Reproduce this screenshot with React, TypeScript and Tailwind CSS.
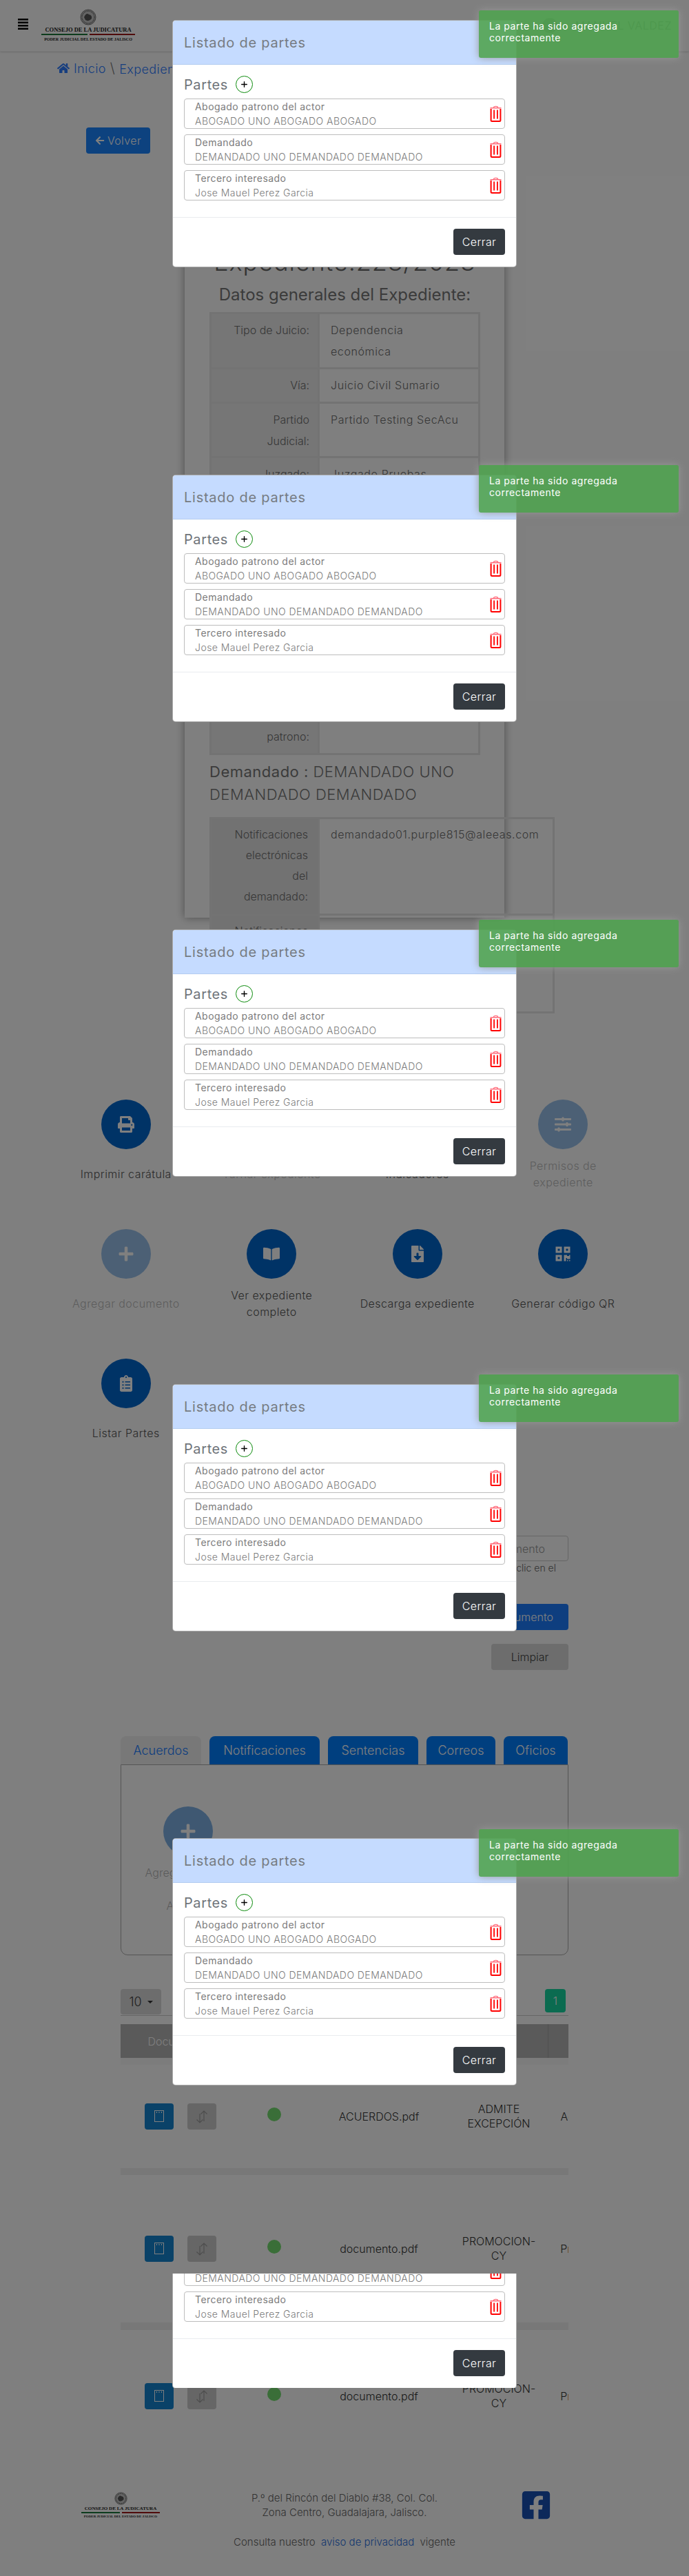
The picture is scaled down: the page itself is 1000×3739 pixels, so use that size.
import React from 'react';
import { Plus } from 'lucide-react';
import {
  FaArrowLeft,
  FaBookOpen,
  FaClipboardList,
  FaFacebookSquare,
  FaFileDownload,
  FaHome,
  FaPlus,
  FaPrint,
  FaQrcode,
  FaSlidersH,
} from 'react-icons/fa';

const parts = [
  { role: 'Abogado patrono del actor', name: 'ABOGADO UNO ABOGADO ABOGADO' },
  { role: 'Demandado', name: 'DEMANDADO UNO DEMANDADO DEMANDADO' },
  { role: 'Tercero interesado', name: 'Jose Mauel Perez Garcia' },
];

const generalRows = [
  { label: ['Tipo de Juicio:'], value: ['Dependencia', 'económica'], h: 'h-[80px]' },
  { label: ['Vía:'], value: ['Juicio Civil Sumario'], h: 'h-[50px]' },
  { label: ['Partido', 'Judicial:'], value: ['Partido Testing SecAcu'], h: 'h-[79px]' },
  { label: ['Juzgado:'], value: ['Juzgado Pruebas', 'SecAcu'], h: 'h-[79px]' },
  { label: ['Fecha de', 'registro:'], value: ['12/05/2023'], h: 'h-[80px]' },
  { label: ['Actor:'], value: ['ACTOR UNO ACTOR ACTOR'], h: 'h-[80px]' },
  { label: ['Correo del', 'actor:'], value: ['actor01@aleeas.com'], h: 'h-[80px]' },
  { label: ['Notificaciones', 'del abogado', 'patrono:'], value: [''], h: 'h-[112px]' },
];

const actions = [
  { label: ['Imprimir carátula'], icon: <FaPrint />, off: false },
  { label: ['Turnar expediente'], icon: <FaPlus />, off: true },
  { label: ['Indicadores'], icon: <FaSlidersH />, off: false },
  { label: ['Permisos de', 'expediente'], icon: <FaSlidersH />, off: true },
  { label: ['Agregar documento'], icon: <FaPlus />, off: true },
  { label: ['Ver expediente', 'completo'], icon: <FaBookOpen />, off: false },
  { label: ['Descarga expediente'], icon: <FaFileDownload />, off: false },
  { label: ['Generar código QR'], icon: <FaQrcode />, off: false },
  { label: ['Listar Partes'], icon: <FaClipboardList />, off: false },
];

const tabs = [
  { name: 'Notificaciones', w: 'w-[160px]' },
  { name: 'Sentencias', w: 'w-[131px]' },
  { name: 'Correos', w: 'w-[100px]' },
  { name: 'Oficios', w: 'w-[93px]' },
];

const MenuBars = () => (
  <svg width="15" height="16" viewBox="0 0 15 16" fill="#000000" className="shrink-0">
    <rect y="0" width="15" height="2.5" />
    <rect y="4.5" width="15" height="2.5" />
    <rect y="9" width="15" height="2.5" />
    <rect y="13.5" width="15" height="2.5" />
  </svg>
);

const TrashIcon = () => (
  <svg width="17" height="24" viewBox="0 0 17 24" fill="none" className="shrink-0">
    <path d="M5.5 3 C5.5 .8 11.5 .8 11.5 3" stroke="#ff6b7a" strokeWidth="1.4" />
    <path d="M.5 3.7 H16.5" stroke="#ff6b7a" strokeWidth="1.6" />
    <path d="M1.6 5 V21.5 Q1.6 23 3.1 23 H13.9 Q15.4 23 15.4 21.5 V5" stroke="#ff0000" strokeWidth="2" />
    <path d="M6.1 6.5 V19.5 M10.9 6.5 V19.5" stroke="#ff0000" strokeWidth="1.8" />
  </svg>
);

const PartsModal = () => (
  <div className="w-[500px] h-[359px] bg-white border border-[#00000055] rounded-[5px] overflow-hidden flex flex-col">
    <div className="h-[64px] bg-[#c5dbff] border-b border-[#b4cdf0] pl-4 flex items-center text-[20px] tracking-[0.75px] text-[#767b82]">
      Listado de partes
    </div>
    <div className="px-4 h-[222px] pt-[16px] border-b border-[#e9ecef]">
      <div className="flex items-center gap-[11px] h-[25px] text-[20px] tracking-[0.6px] text-[#6f747a]">
        Partes
        <span className="w-[25px] h-[25px] rounded-full border border-[#0a8a0a] flex items-center justify-center text-black">
          <Plus size={13} strokeWidth={2.5} />
        </span>
      </div>
      <ul className="mt-[8px] flex flex-col gap-[8px]">
        {parts.map((p) => (
          <li
            key={p.role}
            className="h-[44px] border border-[#bdbdbd] rounded-[4px] pl-[15px] pr-[4px] flex items-center justify-between text-[14px] leading-[21px] tracking-[0.45px] text-[#7b7b7b]"
          >
            <div className="whitespace-nowrap">
              <p>{p.role}</p>
              <p className="font-light">{p.name}</p>
            </div>
            <TrashIcon />
          </li>
        ))}
      </ul>
    </div>
    <div className="flex-1 flex justify-end pt-[16px] pr-4">
      <button className="w-[75px] h-[38px] rounded-[4px] bg-[#343a40] text-white text-[16px] tracking-[0.4px] font-light">
        Cerrar
      </button>
    </div>
  </div>
);

const Toast = () => (
  <div className="w-[290px] h-[69px] rounded-[3px] bg-[#51a351]/90 shadow-[0_0_12px_#999] pt-[14px] pl-[15px] text-[14px] leading-[17px] tracking-[0.55px] text-white">
    La parte ha sido agregada
    <br />
    correctamente
  </div>
);

const Seal = ({ className }: { className: string }) => (
  <svg viewBox="0 0 24 24" className={className}>
    <circle cx="12" cy="12" r="11" fill="#c8c8c8" stroke="#777" strokeWidth="1" />
    <circle cx="12" cy="12" r="9" fill="none" stroke="#555" strokeWidth="1.4" strokeDasharray="1 1" />
    <path d="M6 12 Q9 5 13 8 Q18 9 17 14 Q13 19 8 16 Z" fill="#555" />
  </svg>
);

const HeaderLogo = () => (
  <div className="w-[136px] shrink-0 flex flex-col items-center font-['Liberation_Serif',serif] font-bold text-[#222]">
    <Seal className="w-[24px] h-[24px]" />
    <p className="mt-[1px] whitespace-nowrap text-[8.5px] leading-[11px]">CONSEJO DE LA JUDICATURA</p>
    <div className="w-full flex gap-[3px] h-[2px]">
      <span className="flex-1 bg-[#1d7a3c]" />
      <span className="flex-1 bg-[#a01818]" />
    </div>
    <p className="mt-[2px] whitespace-nowrap text-[6px] leading-[9px]">PODER JUDICIAL DEL ESTADO DE JALISCO</p>
  </div>
);

const FooterLogo = () => (
  <div className="w-[114px] shrink-0 flex flex-col items-center font-['Liberation_Serif',serif] font-bold text-[#222]">
    <Seal className="w-[19px] h-[19px]" />
    <p className="mt-[1px] whitespace-nowrap text-[7.1px] leading-[9px]">CONSEJO DE LA JUDICATURA</p>
    <div className="w-full flex gap-[3px] h-[2px]">
      <span className="flex-1 bg-[#1d7a3c]" />
      <span className="flex-1 bg-[#a01818]" />
    </div>
    <p className="mt-[1px] whitespace-nowrap text-[5px] leading-[8px]">PODER JUDICIAL DEL ESTADO DE JALISCO</p>
  </div>
);

const InfoCell = ({ lines, head = false }: { lines: string[]; head?: boolean }) => (
  <td className={`border-[3px] border-[#e6e6e6] align-top pt-[8px] pb-[6px] leading-[31px] font-light ${head ? 'bg-[#ececec] text-right pr-[12px] pl-[6px]' : 'pl-[16px] pr-[6px] tracking-[0.6px]'}`}>
    {lines.map((l) => (
      <div key={l} className="whitespace-nowrap">{l}</div>
    ))}
  </td>
);

const NotebookIcon = () => (
  <svg width="16" height="18" viewBox="0 0 16 18" fill="none" stroke="#ffffff" strokeWidth="1">
    <rect x="1.5" y=".5" width="13" height="16" />
    <path d="M4 3h1M7.5 3h1M11 3h1" strokeWidth="2" />
  </svg>
);

const SwapIcon = () => (
  <svg width="20" height="20" viewBox="0 0 20 20" fill="none" stroke="#9a9a9a" strokeWidth="1.2">
    <path d="M13 17V2M8.5 6.5 13 2l4.5 4.5" />
    <path d="M7 6v13M2.5 14.5 7 19l4.5-4.5" />
  </svg>
);

const DocRow = ({ file, kind, next, h }: { file: string; kind: string[]; next: string; h: string }) => (
  <div className={`flex items-center whitespace-nowrap font-light text-[16px] leading-[21px] text-[#333] ${h}`}>
    <div className="w-[165px] shrink-0 pl-[35px] flex gap-[20px]">
      <button className="w-[42px] h-[38px] rounded-[4px] bg-[#1484d0] flex items-center justify-center">
        <NotebookIcon />
      </button>
      <button className="w-[42px] h-[38px] rounded-[4px] bg-[#cccccc] flex items-center justify-center">
        <SwapIcon />
      </button>
    </div>
    <div className="w-[116px] shrink-0 flex justify-center">
      <span className="w-[20px] h-[20px] rounded-full bg-[#75dd70] mb-[6px]" />
    </div>
    <div className="w-[188px] shrink-0 text-center">{file}</div>
    <div className="w-[160px] shrink-0 text-center">
      {kind.map((k) => (
        <div key={k}>{k}</div>
      ))}
    </div>
    <div className="w-[152px] shrink-0 text-center">{next}</div>
  </div>
);

const modalTops = ['top-[29px]', 'top-[689px]', 'top-[1349px]', 'top-[2009px]', 'top-[2668px]'];
const toastTops = ['top-[15px]', 'top-[675px]', 'top-[1335px]', 'top-[1995px]', 'top-[2655px]'];

export default function App() {
  return (
    <div className="relative w-[1000px] h-[3739px] overflow-hidden bg-white font-['Inter',sans-serif] text-[16px] text-[#6e6e6e]">
      {/* top bar */}
      <header className="h-[75px] flex items-center border-b border-[#eee] shadow-sm">
        <div className="ml-[26px] mb-[5px]">
          <MenuBars />
        </div>
        <div className="ml-[19px]">
          <HeaderLogo />
        </div>
        <div className="ml-auto pr-[25px] flex items-center gap-[26px] text-[16px] tracking-[0.5px]">
          <span className="w-[22px] h-[22px] rounded-full bg-[#999]" />
          MANUEL VALDEZ
        </div>
      </header>

      <div className="mt-[12px] h-[24px] pl-[83px] flex items-center gap-[6px] text-[#2f7dff] text-[18px] tracking-[0.4px] font-light whitespace-nowrap">
        <FaHome size={18} />
        <span>Inicio</span>
        <span className="text-[#777] text-[20px]">\</span>
        <span className="mt-[3px]">Expediente</span>
      </div>

      <button className="mt-[74px] ml-[125px] w-[93px] h-[38px] rounded-[4px] bg-[#1a84ff] text-white font-light text-[16px] tracking-[0.4px] flex items-center justify-center gap-[4px]">
        <FaArrowLeft size={14} /> Volver
      </button>

      {/* general data card */}
      <section className="mt-[107px] ml-[268px] w-[464px] h-[1002px] bg-white shadow-[0_0_12px_#00000066] pt-[30px] pl-[36px]">
        <h1 className="w-[393px] text-center text-[36px] leading-[40px] tracking-[0.9px] text-[#666] font-light whitespace-nowrap">
          Expediente:223/2023
        </h1>
        <h2 className="mt-[12px] w-[393px] text-center text-[24px] leading-[32px] text-[#777] whitespace-nowrap">
          Datos generales del Expediente:
        </h2>
        <table className="mt-[9px] w-[393px] table-fixed border-collapse">
          <colgroup>
            <col className="w-[157px]" />
            <col />
          </colgroup>
          <tbody>
            {generalRows.map((row) => (
              <tr key={row.label.join()} className={row.h}>
                <InfoCell lines={row.label} head />
                <InfoCell lines={row.value} />
              </tr>
            ))}
          </tbody>
        </table>
        <h3 className="mt-[8px] w-[393px] text-[22px] leading-[33px] tracking-[0.5px] text-[#777] font-light">
          <span className="font-normal">Demandado :</span> DEMANDADO UNO DEMANDADO DEMANDADO
        </h3>
        <table className="mt-[16px] w-[501px] table-fixed border-collapse">
          <colgroup>
            <col className="w-[157px]" />
            <col />
          </colgroup>
          <tbody>
            <tr className="h-[140px]">
              <td className="border-[3px] border-[#e6e6e6] bg-[#e4e4e4] text-right pr-[14px] pt-[7px] pb-[6px] align-top leading-[30px] font-light">
                Notificaciones
                <br />
                electrónicas
                <br />
                del
                <br />
                demandado:
              </td>
              <td className="border-[3px] border-[#e6e6e6] pl-[16px] pt-[7px] pb-[6px] align-top leading-[30px] font-light tracking-[0.6px] whitespace-nowrap">
                demandado01.purple815@aleeas.com
              </td>
            </tr>
            <tr className="h-[142px]">
              <td className="border-[3px] border-[#e6e6e6] bg-[#e4e4e4] text-right pr-[14px] pt-[7px] pb-[6px] align-top leading-[30px] font-light">
                Notificaciones
                <br />
                físicas
                <br />
                del
                <br />
                demandado:
              </td>
              <td className="border-[3px] border-[#e6e6e6]" />
            </tr>
          </tbody>
        </table>
      </section>

      {/* actions */}
      <section className="mt-[264px] mx-auto w-[846px] grid grid-cols-4 gap-y-[56px]">
        {actions.map((a) => (
          <div key={a.label.join()} className={`h-[132px] flex flex-col items-center ${a.off ? 'opacity-40' : ''}`}>
            <span className="w-[72px] h-[72px] rounded-full bg-[#0066cc] text-white text-[24px] flex items-center justify-center">
              {a.icon}
            </span>
            <div className="mt-[12px] h-[48px] flex flex-col justify-center items-center text-[16px] leading-[24px] font-light text-[#555] tracking-[0.45px] whitespace-nowrap">
              {a.label.map((l) => (
                <span key={l}>{l}</span>
              ))}
            </div>
          </div>
        ))}
      </section>

      {/* upload form */}
      <section className="mt-[125px] mx-auto w-[650px] flex flex-col items-end">
        <input
          readOnly
          placeholder="Nombre del documento"
          className="w-[217px] h-[37px] border border-[#ccc] rounded-[4px] pl-[6px] text-[16px] font-light placeholder:text-[#999]"
        />
        <p className="pr-[18px] text-[14px] leading-[20px] font-light text-[#666]">dando clic en el</p>
        <button className="mt-[42px] w-[202px] h-[38px] rounded-[4px] bg-[#1c7cff] text-white font-light pl-[10px]">
          Agregar documento
        </button>
        <button className="mt-[20px] w-[112px] h-[38px] rounded-[4px] bg-[#dadada] text-[#444] font-light">Limpiar</button>
      </section>

      {/* tabs */}
      <nav className="mt-[96px] mx-auto w-[650px] flex gap-[12px] text-[18px] font-light whitespace-nowrap">
        <span className="w-[117px] h-[41px] rounded-t-[8px] bg-[#f0f0f0] text-[#1a7cff] flex items-center justify-center">
          Acuerdos
        </span>
        {tabs.map((t) => (
          <span key={t.name} className={`${t.w} h-[41px] rounded-t-[8px] bg-[#007efe] text-white flex items-center justify-center`}>
            {t.name}
          </span>
        ))}
      </nav>
      <section className="mx-auto w-[650px] h-[277px] border border-[#aaa] rounded-b-[10px] pt-[60px] pl-[36px]">
        <div className="w-[122px] flex flex-col items-center text-center font-light leading-[24px] whitespace-nowrap opacity-50">
          <span className="w-[72px] h-[72px] rounded-full bg-[#0066cc] text-white text-[24px] flex items-center justify-center">
            <FaPlus />
          </span>
          <p className="mt-[12px]">Agregar acuerdo</p>
          <p>de</p>
          <p>Acuerdo</p>
        </div>
      </section>

      {/* documents table */}
      <section className="mx-auto w-[650px] overflow-hidden">
        <div className="mt-[49px] h-[39px] border-b border-[#ccc] flex items-start justify-between pr-[4px]">
          <button className="w-[59px] h-[37px] rounded-[4px] bg-[#dadada] text-[#444] text-[18px] font-light flex items-center justify-center gap-[8px]">
            10 <span className="border-x-[4px] border-x-transparent border-t-[4px] border-t-[#333]" />
          </button>
          <span className="w-[30px] h-[34px] rounded-[4px] bg-[#16d6a0] text-white font-light flex items-center justify-center">1</span>
        </div>
        <div className="mt-[12px] h-[49px] bg-[#b4b4b4] text-white font-light flex items-center">
          <div className="w-[165px] text-center">Documento</div>
          <div className="w-[116px] text-center">Estado</div>
          <div className="w-[188px] text-center">Nombre</div>
          <div className="w-[152px] h-full border-r border-[#a0a0a0] flex items-center justify-center">Etiqueta</div>
        </div>
        <div className="h-[10px] bg-[#f8f8f8]" />
        <DocRow file="ACUERDOS.pdf" kind={['ADMITE', 'EXCEPCIÓN']} next="Admite excepción" h="h-[150px]" />
        <div className="h-[10px] bg-[#f0f0f0]" />
        <DocRow file="documento.pdf" kind={['PROMOCION-', 'CY']} next="Promoción cy test" h="h-[214px]" />
        <div className="h-[11px] bg-[#f0f0f0]" />
        <DocRow file="documento.pdf" kind={['PROMOCION-', 'CY']} next="Promoción cy test" h="h-[192px]" />
      </section>

      <footer className="font-light text-[#666] text-[15px] leading-[21px]">
        <div className="mt-[43px] pl-[118px] flex items-start">
          <FooterLogo />
          <p className="ml-[68px] w-[400px] -mt-[2px] text-center">
            P.º del Rincón del Diablo #38, Col. Col.
            <br />
            Zona Centro, Guadalajara, Jalisco.
          </p>
          <FaFacebookSquare size={46} className="ml-[55px] -mt-[4px] text-[#1850b4]" />
        </div>
        <p className="mt-[20px] text-center">
          Consulta nuestro <a className="mx-[4px] text-[#2a6fe0]">aviso de privacidad</a> vigente
        </p>
      </footer>

      {/* backdrop and the stacked dialogs */}
      <div className="absolute inset-0 bg-black/50" />
      {modalTops.map((top) => (
        <div key={top} className={`absolute left-[250px] ${top}`}>
          <PartsModal />
        </div>
      ))}
      <div className="absolute left-[250px] top-[3300px] h-[166px] overflow-hidden">
        <div className="-mt-[192px]">
          <PartsModal />
        </div>
      </div>
      {toastTops.map((top) => (
        <div key={top} className={`absolute left-[695px] ${top}`}>
          <Toast />
        </div>
      ))}
    </div>
  );
}
